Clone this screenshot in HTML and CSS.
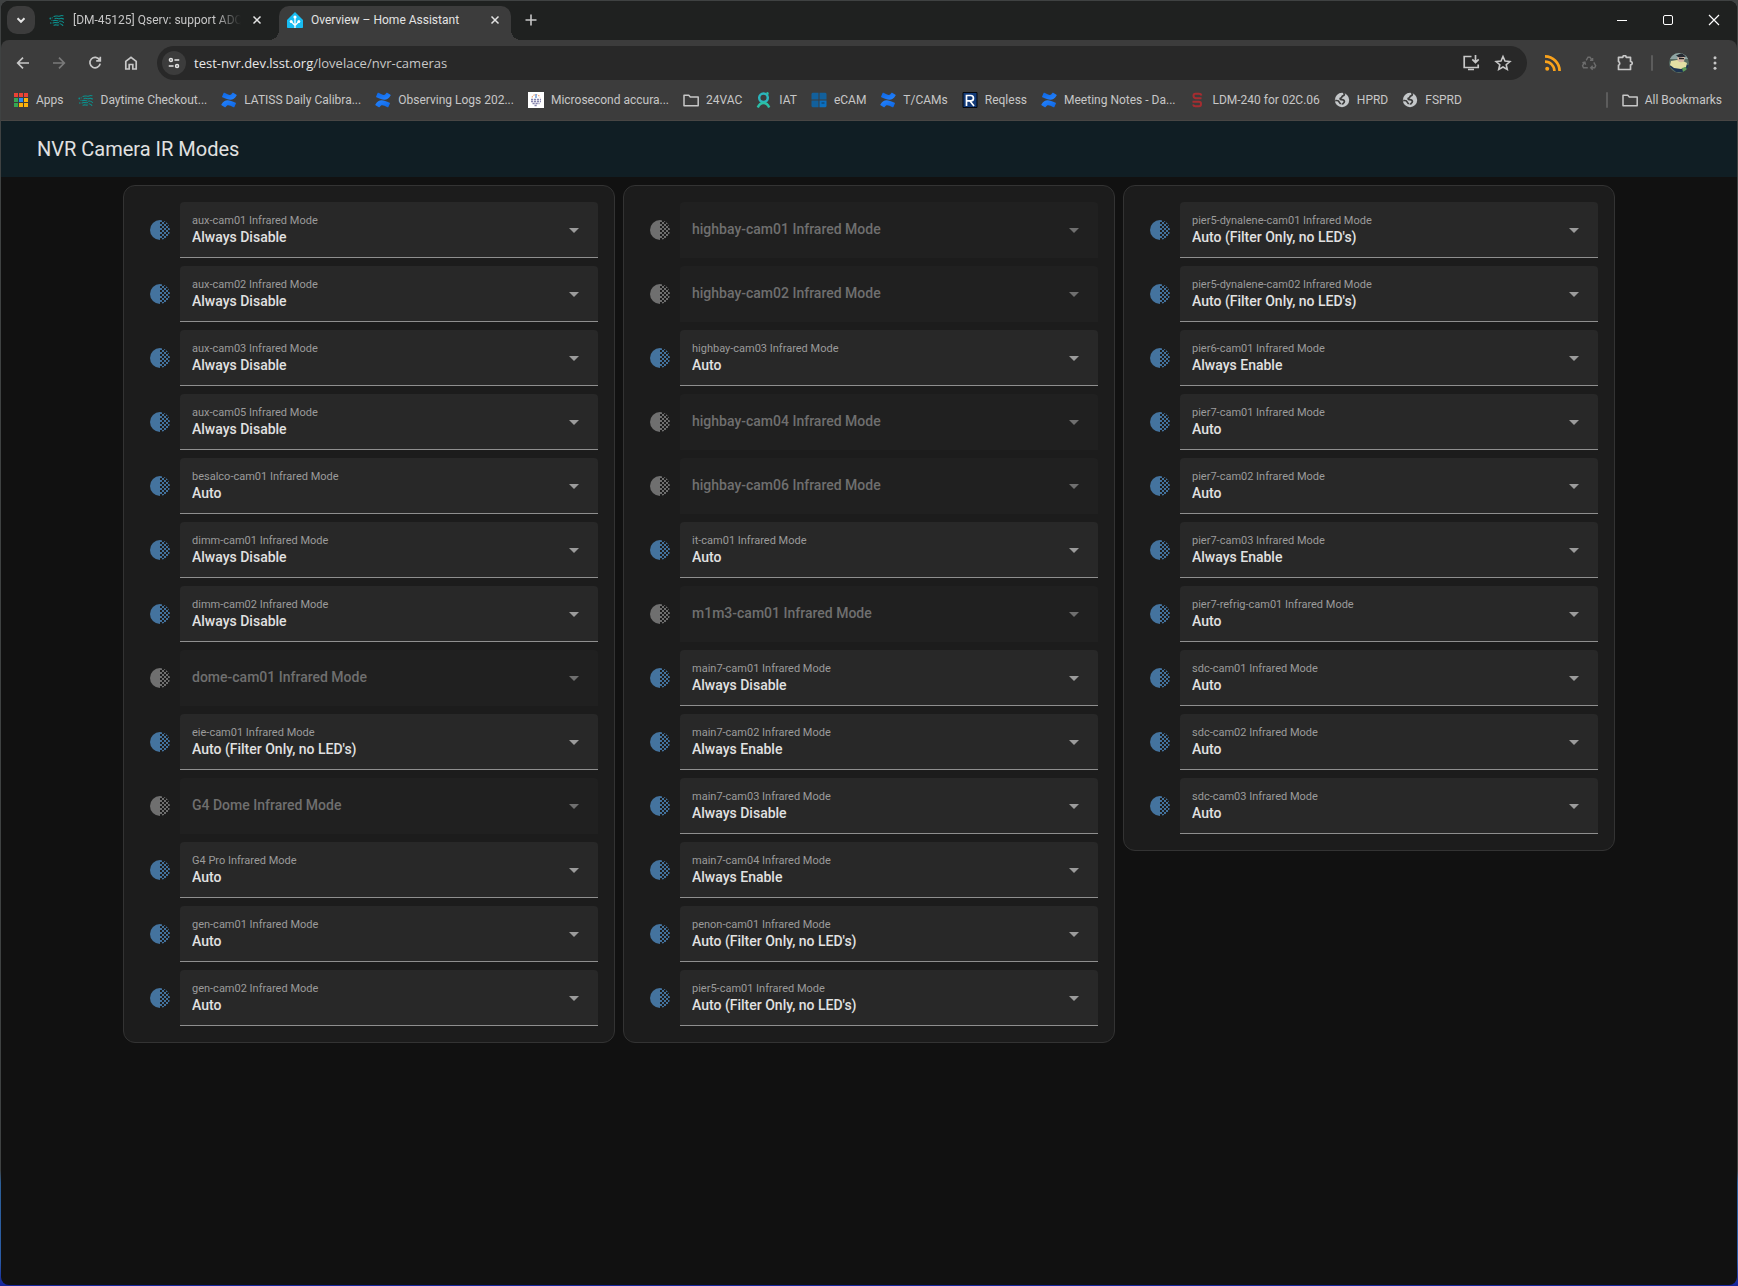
FILE: index.html
```html
<!DOCTYPE html>
<html lang="en">
<head>
<meta charset="utf-8">
<title>Overview – Home Assistant</title>
<link rel="stylesheet" href="styles.css">
</head>
<body>
<svg class="sprite" aria-hidden="true">
  <defs>
    <clipPath id="disc"><circle cx="12" cy="12" r="10"/></clipPath>
    <linearGradient id="blue-a" x1="1" y1="1" x2="0" y2="0"><stop offset="0" stop-color="#0c66e4"/><stop offset="1" stop-color="#2684ff"/></linearGradient>
    <linearGradient id="blue-b" x1="0" y1="0" x2="1" y2="1"><stop offset="0" stop-color="#0c66e4"/><stop offset="1" stop-color="#2684ff"/></linearGradient>
  </defs>
  <symbol id="i-opacity" viewBox="0 0 24 24">
    <g clip-path="url(#disc)" fill="currentColor">
      <path d="M2 2h10v20H2z"/>
      <path d="M12 2h2v2h-2zM12 6h2v2h-2zM12 10h2v2h-2zM12 14h2v2h-2zM12 18h2v2h-2zM14 4h2v2h-2zM14 8h2v2h-2zM14 12h2v2h-2zM14 16h2v2h-2zM14 20h2v2h-2zM16 2h2v2h-2zM16 6h2v2h-2zM16 10h2v2h-2zM16 14h2v2h-2zM16 18h2v2h-2zM18 4h2v2h-2zM18 8h2v2h-2zM18 12h2v2h-2zM18 16h2v2h-2zM20 6h2v2h-2zM20 10h2v2h-2zM20 14h2v2h-2z"/>
    </g>
  </symbol>
  <symbol id="i-x" viewBox="0 0 16 16"><path d="M4 4l8 8M12 4l-8 8" fill="none" stroke="currentColor" stroke-width="1.7"/></symbol>
  <symbol id="i-confluence" viewBox="0 0 16 16">
    <path d="M.4 12.400c-.2.3-.1.6.2.8l3.200 2c.3.2.7.1.9-.2 1.300-2 2.200-2.400 4.800-1.200l3 1.400c.3.2.7 0 .9-.3l1.500-3.400c.1-.3 0-.7-.3-.8C7.500 7.300 3.800 6.900.4 12.400z" fill="url(#blue-a)"/>
    <path d="M15.600 3.600c.2-.3.1-.6-.2-.8l-3.200-2c-.3-.2-.7-.1-.9.200-1.300 2-2.200 2.400-4.800 1.200l-3-1.400c-.3-.2-.7 0-.9.300L1.100 4.500c-.1.300 0 .7.300.8 7.100 3.400 10.800 3.800 14.200-1.700z" fill="url(#blue-b)"/>
  </symbol>
  <symbol id="i-rubin" viewBox="0 0 16 16">
    <g fill="none" stroke="#0c8f8c" stroke-width="1.100" stroke-linecap="round">
      <path d="M5 4.500c2-1.500 4 .5 6-.6 1-.5 2-.6 3-.1"/><path d="M6 6.600c2-1 3 .6 5 0 1.500-.4 2-.6 3.500.4"/>
      <path d="M4.500 8.700c1.500-1 3 .2 4.500 0"/><path d="M4 11c2-1.400 3.500.3 5.500-.4M10.500 9.200c1.500-.5 3 .2 4 1.300"/><path d="M5 13.200c1.800-1 3 .3 4.500-.2M11 11.800c1.300 0 2 .8 2.800 1.600"/>
    </g>
    <g fill="#0c8f8c"><circle cx="1.300" cy="6.500" r=".9"/><circle cx="3.200" cy="5.800" r=".6"/><circle cx="1.800" cy="11" r=".8"/><circle cx="3" cy="8.300" r=".6"/></g>
  </symbol>
  <symbol id="i-folder" viewBox="0 0 16 16"><path d="M1 12.900V3.200h4.800l1.500 1.700h7.900v8.800H1z" fill="none" stroke="currentColor" stroke-width="1.500" stroke-linejoin="round"/></symbol>
  <symbol id="i-globe" viewBox="0 0 16 16"><circle cx="8" cy="8" r="7.200" fill="#c4c7c9"/><path d="M9.300 1.200c1.800.8 1.200 2.300-.3 2.600C7.400 4.100 8.300 5.700 6.900 6c-1.300.3-.9 1.500.6 1.600 2.200.1 2.900.8 2.900 2 0 1.600-1.800 1.400-2 3.100M1.200 8.600c1.600-.2 3.800.4 4.100 1.600.2 1 1.200.8 1.300 2" fill="none" stroke="#3c3c3c" stroke-width="1.700"/></symbol>
</svg>

<div class="window">
  <header class="browser">
    <div class="tabstrip">
      <button class="tab-search" aria-label="Search tabs"><svg viewBox="0 0 16 16"><path d="M4.500 6.300L8 9.800l3.500-3.500" fill="none" stroke="currentColor" stroke-width="2"/></svg></button>
      <div class="tab">
        <svg class="fav"><use href="#i-rubin"/></svg>
        <span class="tab-title faded">[DM-45125] Qserv: support ADQ</span>
        <button class="tab-close" aria-label="Close tab"><svg><use href="#i-x"/></svg></button>
      </div>
      <div class="tab active">
        <svg class="fav" viewBox="0 0 16 16"><path d="M8 0l8 8v7.200a.8.8 0 0 1-.8.8H.8a.8.8 0 0 1-.8-.8V8z" fill="#18bcf2"/><path d="M8 16V5.500M8 13.500L4.300 9.800M8 13.500l3.700-3.700" stroke="#fff" stroke-width="1.300" fill="none"/><g fill="#fff"><circle cx="8" cy="5" r="1.600"/><circle cx="4.200" cy="9.600" r="1.500"/><circle cx="11.800" cy="9.600" r="1.500"/></g></svg>
        <span class="tab-title">Overview – Home Assistant</span>
        <button class="tab-close" aria-label="Close tab"><svg><use href="#i-x"/></svg></button>
      </div>
      <button class="new-tab" aria-label="New tab"><svg viewBox="0 0 16 16"><path d="M8 2.500v11M2.500 8h11" stroke="currentColor" stroke-width="1.600"/></svg></button>
      <div class="win-controls">
        <button aria-label="Minimize"><svg viewBox="0 0 16 16"><path d="M3 8.500h10" stroke="currentColor"/></svg></button>
        <button aria-label="Maximize"><svg viewBox="0 0 16 16"><rect x="3.500" y="3.500" width="9" height="9" rx="1.500" fill="none" stroke="currentColor"/></svg></button>
        <button aria-label="Close window"><svg viewBox="0 0 16 16"><path d="M3 3l10 10M13 3L3 13" stroke="currentColor" stroke-width="1.200"/></svg></button>
      </div>
    </div>
    <div class="toolbar">
      <button class="tool" aria-label="Back"><svg viewBox="0 0 16 16"><path d="M14 8H3M8 2.700L2.700 8 8 13.300" fill="none" stroke="currentColor" stroke-width="1.700"/></svg></button>
      <button class="tool dim" aria-label="Forward"><svg viewBox="0 0 16 16"><path d="M2 8h11M8 2.700L13.300 8 8 13.300" fill="none" stroke="currentColor" stroke-width="1.700"/></svg></button>
      <button class="tool" aria-label="Reload"><svg viewBox="0 0 16 16"><path d="M12.600 5A5.200 5.200 0 1 0 13.200 8.600M13.300 1.800v4.100H9.200" fill="none" stroke="currentColor" stroke-width="1.700"/></svg></button>
      <button class="tool" aria-label="Home"><svg viewBox="0 0 16 16"><path d="M2.800 14V6.300L8 2.300l5.200 4V14H9.800V9.500H6.200V14z" fill="none" stroke="currentColor" stroke-width="1.700"/></svg></button>
      <div class="omnibox">
        <button class="site-info" aria-label="View site information"><svg viewBox="0 0 16 16" fill="none" stroke="currentColor" stroke-width="1.700"><circle cx="4.500" cy="4.500" r="1.700"/><path d="M8.500 4.500H14M2 11.500h5.500"/><circle cx="11.500" cy="11.500" r="1.700"/></svg></button>
        <p class="url">test-nvr.dev.lsst.org<span>/lovelace/nvr-cameras</span></p>
        <button class="omni-btn" aria-label="Install page"><svg viewBox="0 0 18 18" fill="none" stroke="currentColor" stroke-width="1.700"><path d="M9.500 2.500H2.200v11h14v-3M13.500 1v7M10.300 5.300l3.200 3.200 3.200-3.200M6 15.500h6"/></svg></button>
        <button class="omni-btn" aria-label="Bookmark this page"><svg viewBox="0 0 18 18"><path d="M9 2.500l2 4.500 4.900.5-3.700 3.200 1.100 4.800L9 13l-4.300 2.500 1.100-4.800-3.700-3.200L7 7z" fill="none" stroke="currentColor" stroke-width="1.600"/></svg></button>
      </div>
      <button class="tool" aria-label="RSS feed"><svg viewBox="0 0 16 16" fill="none" stroke="#f9a21b" stroke-width="2.700"><circle cx="2.200" cy="13.800" r="2" fill="#f9a21b" stroke="none"/><path d="M0 6.600A9.400 9.400 0 0 1 9.400 16M0 1.400A14.600 14.600 0 0 1 14.600 16"/></svg></button>
      <button class="tool faint" aria-label="Recycle extension"><svg viewBox="0 0 16 16" fill="none" stroke="currentColor" stroke-width="1.400"><path d="M5.200 5.300L7 2.200h2L10.800 5M11.600 2.900v2.500H9M12.800 7.300l1.900 3.500-1 1.900h-3.500M11.700 10.700l-2 2 2 2M6.800 12.700H2.500l-1-1.900 2-3.300M1.400 7.800l2.500-.6.700 2.500"/></svg></button>
      <button class="tool" aria-label="Extensions"><svg viewBox="0 0 16 16"><path d="M1.500 2.300h4.300a1.700 1.700 0 0 1 3.400 0h4.300v4.200a1.700 1.700 0 0 1 0 3.400v4.600h-12v-4.200a2.100 2.100 0 0 0 0-3.800z" fill="none" stroke="currentColor" stroke-width="1.700" stroke-linejoin="round"/></svg></button>
      <i class="rule"></i>
      <button class="tool" aria-label="Profile"><svg class="avatar" viewBox="0 0 20 20"><clipPath id="face"><circle cx="10" cy="10" r="10"/></clipPath><g clip-path="url(#face)"><path d="M0 0h20v20H0z" fill="#566b62"/><path d="M0 0h20v6H0z" fill="#8fa5a3"/><path d="M0 13l7 6h13v-7z" fill="#1d3350"/><path d="M2 8l6-1 6 1 4 2-1 4-5 2-7-1-4-3z" fill="#e3dfa4"/><ellipse cx="12" cy="5.500" rx="3.600" ry="3.800" fill="#d6b7a4"/><path d="M7 2.500L13 0l4 3.800-7 .7z" fill="#262b33"/><path d="M10 5h5v1.300h-5z" fill="#222"/><path d="M13 15l4-1 1 3-4 2z" fill="#5f9c57"/></g></svg></button>
      <button class="tool" aria-label="Menu"><svg viewBox="0 0 16 16" fill="currentColor"><circle cx="8" cy="2.700" r="1.500"/><circle cx="8" cy="8" r="1.500"/><circle cx="8" cy="13.300" r="1.500"/></svg></button>
    </div>
    <nav class="bookmarks">
      <a href="#"><svg viewBox="0 0 16 16"><path d="M1 1h4v4H1zM6 1h4v4H6zM11 1h4v4h-4z" fill="#ea4335"/><path d="M1 6h4v4H1zM1 11h4v4H1z" fill="#34a853"/><path d="M6 6h4v4H6z" fill="#2b8cf4"/><path d="M11 6h4v4h-4zM6 11h4v4H6zM11 11h4v4h-4z" fill="#fbb30b"/><path d="M5.500 1v14M10.500 1v14M1 5.500h14M1 10.500h14" stroke="#3c3c3c"/></svg>Apps</a>
      <a href="#"><svg><use href="#i-rubin"/></svg>Daytime Checkout...</a>
      <a href="#"><svg><use href="#i-confluence"/></svg>LATISS Daily Calibra...</a>
      <a href="#"><svg><use href="#i-confluence"/></svg>Observing Logs 202...</a>
      <a href="#"><svg viewBox="0 0 16 16"><path d="M0 0h16v16H0z" fill="#fff"/><path d="M4 5.500a4.200 4.200 0 0 1 8 0" fill="none" stroke="#f0a878" stroke-width="1.200" stroke-dasharray="1.500 1"/><path d="M8 2v4" stroke="#6f9bd8" stroke-width="1.500"/><path d="M3 7.500h10M3 9.500h10M4.500 11.500h7M6.500 13.500h3" stroke="#8583ad" stroke-width="1.400" stroke-dasharray="2.200 .8"/></svg>Microsecond accura...</a>
      <a href="#"><svg><use href="#i-folder"/></svg>24VAC</a>
      <a href="#"><svg viewBox="0 0 16 16" fill="none" stroke="#2bb5bd" stroke-width="2.500"><circle cx="7.500" cy="5.800" r="4.300"/><path d="M10.500 1.800l2-.8M1.800 15.500c1.500-3.700 4-4.500 5.700-4.500s4.200.8 5.700 4.500" stroke="#2bbfa6"/></svg>IAT</a>
      <a href="#"><svg viewBox="0 0 16 16"><path d="M1.500.8h6v6.700h-7V1.800zM8.500.8h6l1 1v5.700h-7z" fill="#12609c"/><path d="M.5 8.500h7v6.700h-6l-1-1z" fill="#12609c"/><path d="M8.500 8.500h7v5.700l-1 1h-6z" fill="#0b6fc0"/><path d="M10.500 11h3" stroke="#123a5c" stroke-width="1"/></svg>eCAM</a>
      <a href="#"><svg><use href="#i-confluence"/></svg>T/CAMs</a>
      <a href="#"><svg viewBox="0 0 16 16"><path d="M1 .5h14v15H1z" fill="#123a78" stroke="#05080f"/><path d="M4.500 14V3.500h4.300a2.600 2.600 0 0 1 0 5.300H5M8 9l4 5" fill="none" stroke="#fff" stroke-width="1.700"/></svg>Reqless</a>
      <a href="#"><svg><use href="#i-confluence"/></svg>Meeting Notes - Da...</a>
      <a href="#"><svg viewBox="0 0 16 16"><path d="M12.500 3.500Q12 1.800 10 1.800H6.500Q4.500 1.800 4.500 3.800T6.500 6.300h6M3.500 9.700h6.500q2 0 2 2.300t-2 2.300H6.500q-2 0-2.500-1.800" fill="none" stroke="#a52c30" stroke-width="2"/></svg>LDM-240 for 02C.06</a>
      <a href="#"><svg><use href="#i-globe"/></svg>HPRD</a>
      <a href="#"><svg><use href="#i-globe"/></svg>FSPRD</a>
      <i class="rule push"></i>
      <a href="#"><svg><use href="#i-folder"/></svg>All Bookmarks</a>
    </nav>
  </header>

  <main class="dashboard">
    <h1>NVR Camera IR Modes</h1>
    <div class="columns" id="columns"></div>
  </main>
</div>
<script src="cameras.js"></script>
</body>
</html>
```

FILE: cameras.js
```javascript
const OFF = "Always Disable";
const ON = "Always Enable";
const AUTO = "Auto";
const FILTER = "Auto (Filter Only, no LED's)";

// One list per card; a camera without a mode is unavailable.
const cards = [
  [
    ["aux-cam01", OFF], ["aux-cam02", OFF], ["aux-cam03", OFF], ["aux-cam05", OFF],
    ["besalco-cam01", AUTO], ["dimm-cam01", OFF], ["dimm-cam02", OFF], ["dome-cam01"],
    ["eie-cam01", FILTER], ["G4 Dome"], ["G4 Pro", AUTO], ["gen-cam01", AUTO], ["gen-cam02", AUTO],
  ],
  [
    ["highbay-cam01"], ["highbay-cam02"], ["highbay-cam03", AUTO], ["highbay-cam04"],
    ["highbay-cam06"], ["it-cam01", AUTO], ["m1m3-cam01"], ["main7-cam01", OFF],
    ["main7-cam02", ON], ["main7-cam03", OFF], ["main7-cam04", ON],
    ["penon-cam01", FILTER], ["pier5-cam01", FILTER],
  ],
  [
    ["pier5-dynalene-cam01", FILTER], ["pier5-dynalene-cam02", FILTER], ["pier6-cam01", ON],
    ["pier7-cam01", AUTO], ["pier7-cam02", AUTO], ["pier7-cam03", ON],
    ["pier7-refrig-cam01", AUTO], ["sdc-cam01", AUTO], ["sdc-cam02", AUTO], ["sdc-cam03", AUTO],
  ],
];

function row([name, mode]) {
  const id = name.toLowerCase().replace(" ", "-");
  const options = [AUTO, ON, FILTER, OFF]
    .map((m) => `<option${m === mode ? " selected" : ""}>${m}</option>`)
    .join("");
  return `<div class="row${mode ? "" : " unavailable"}">
    <svg class="state"><use href="#i-opacity"/></svg>
    <div class="field">
      <label for="${id}">${name} Infrared Mode</label>
      <select id="${id}"${mode ? "" : " disabled"}>${mode ? options : ""}</select>
      <svg class="caret" viewBox="0 0 10 5"><path d="M0 0h10L5 5z" fill="currentColor"/></svg>
    </div>
  </div>`;
}

document.getElementById("columns").innerHTML = cards
  .map((cameras) => `<section class="card">${cameras.map(row).join("")}</section>`)
  .join("");
```

FILE: styles.css
```css
:root {
  --chrome: #3c3c3c;
  --chrome-text: #c7c7c7;
  --strip: #1f2120;
}

* { box-sizing: border-box; }

body {
  margin: 0;
  min-height: 100vh;
  display: flex;
  padding: 1px;
  background: linear-gradient(#3f4242 0 91%, #2c5f98 92%, #2b5ca6 98%, #15249c);
  font-family: Roboto, sans-serif;
}

button {
  border: 0;
  padding: 0;
  background: none;
  color: inherit;
  display: grid;
  place-items: center;
}

.sprite { position: absolute; width: 0; height: 0; }

.window {
  flex: 1;
  min-width: 0;
  display: flex;
  flex-direction: column;
  border-radius: 8px;
  overflow: hidden;
  background: #111;
}

/* Browser frame */
.browser {
  background: var(--strip);
  color: var(--chrome-text);
  font: 12px/16px Roboto, sans-serif;
}

.tabstrip {
  display: flex;
  gap: 6px;
  height: 39px;
  padding: 5px 0 0 6px;
}

.tab-search {
  width: 28px;
  height: 28px;
  border-radius: 10px;
  background: var(--chrome);
  color: #e3e3e3;
}
.tab-search svg { width: 16px; height: 16px; }

.tab {
  position: relative;
  width: 232px;
  height: 34px;
  padding: 0 8px 6px;
  display: flex;
  align-items: center;
  gap: 8px;
}
.tab.active {
  background: var(--chrome);
  color: #e3e3e3;
  border-radius: 10px 10px 0 0;
}
.tab.active::before,
.tab.active::after {
  content: "";
  position: absolute;
  bottom: 0;
  width: 10px;
  height: 10px;
}
.tab.active::before { left: -10px; background: radial-gradient(circle at 0 0, var(--strip) 10px, var(--chrome) 10px); }
.tab.active::after { right: -10px; background: radial-gradient(circle at 100% 0, var(--strip) 10px, var(--chrome) 10px); }
.fav { width: 16px; height: 16px; flex: none; }
.tab-title { flex: 1; min-width: 0; overflow: hidden; white-space: nowrap; }
.tab-title.faded { mask-image: linear-gradient(90deg, #000 85%, transparent); }
.tab-close { width: 16px; height: 16px; color: #e3e3e3; }
.tab-close svg { width: 14px; height: 14px; }
.new-tab { width: 28px; height: 28px; }
.new-tab svg { width: 16px; height: 16px; }

.win-controls { margin-left: auto; display: flex; color: #fff; height: 28px; }
.win-controls button { width: 46px; }
.win-controls svg { width: 16px; height: 16px; }

.toolbar {
  display: flex;
  align-items: center;
  padding: 6px 4px 0;
  background: var(--chrome);
  border-radius: 8px 8px 0 0;
}
.tool { width: 36px; height: 34px; flex: none; }
.tool svg { width: 16px; height: 16px; }
.tool .avatar { width: 20px; height: 20px; }
.tool.dim { color: #7a7a7a; }
.tool.faint { color: #6c6c6c; }

.rule { width: 2px; height: 16px; margin: 0 8px; background: #5c5c5c; border-radius: 1px; }
.rule.push { margin: 0 0 0 auto; }

.omnibox {
  flex: 1;
  height: 34px;
  margin: 0 8px;
  padding: 0 8px 0 5px;
  display: flex;
  align-items: center;
  border-radius: 17px;
  background: #282828;
}
.site-info { width: 24px; height: 24px; border-radius: 50%; background: var(--chrome); color: #e3e3e3; }
.site-info svg { width: 14px; height: 14px; }
.url { flex: 1; margin: 0 8px; font-family: "Open Sans", sans-serif; font-size: 13px; color: #e8e8e8; }
.url span { color: var(--chrome-text); }
.omni-btn { width: 32px; height: 32px; }
.omni-btn svg { width: 18px; height: 18px; }

.bookmarks {
  display: flex;
  align-items: center;
  gap: 14px;
  height: 41px;
  padding: 0 15px 0 12px;
  background: var(--chrome);
  border-bottom: 1px solid #484644;
}
.bookmarks a {
  display: flex;
  align-items: center;
  gap: 7px;
  color: inherit;
  text-decoration: none;
  white-space: nowrap;
}
.bookmarks svg { width: 16px; height: 16px; flex: none; }

/* Dashboard */
.dashboard { flex: 1; }
h1 {
  margin: 0;
  height: 56px;
  padding: 0 36px;
  font: 400 20px/56px Roboto, sans-serif;
  color: #e1e1e1;
  background: #101e24;
}
.columns {
  display: flex;
  justify-content: center;
  align-items: flex-start;
  gap: 8px;
  padding: 8px;
}
.card {
  flex: 0 1 492px;
  min-width: 0;
  display: grid;
  gap: 8px;
  padding: 16px;
  border: 1px solid #333;
  border-radius: 12px;
  background: #1c1c1c;
}
.row { display: flex; align-items: center; }
.state { width: 24px; height: 24px; margin: 0 8px; flex: none; color: #44739e; }
.unavailable .state { color: #6f6f6f; }

/* Label, select and caret share one grid cell. */
.field {
  flex: 1;
  min-width: 0;
  display: grid;
  height: 56px;
  border-bottom: 1px solid #8f8f8f;
  border-radius: 4px 4px 0 0;
  background: #282828;
  color: #9b9b9b;
}
.field > * { grid-area: 1 / 1; }
.field label {
  z-index: 1;
  pointer-events: none;
  padding: 11px 12px 0;
  font-size: 11px;
  font-weight: 400;
  line-height: 16px;
}
.field select {
  appearance: none;
  width: 100%;
  border: 0;
  padding: 14px 40px 0 12px;
  border-radius: inherit;
  background: none;
  color: #e1e1e1;
  font: 500 14px/20px Roboto, sans-serif;
}
.caret { place-self: center end; width: 10px; height: 5px; margin: 2px 19px 0 0; pointer-events: none; }

.unavailable .field { background: #202020; border-bottom-color: #202020; color: #6f6f6f; }
.unavailable label { padding-top: 17px; font-size: 14px; font-weight: 500; line-height: 20px; }
```
